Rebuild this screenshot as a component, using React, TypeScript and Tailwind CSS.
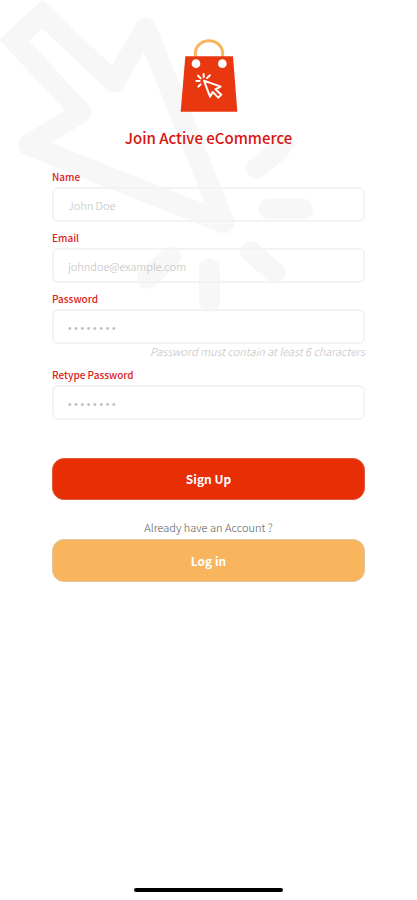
import type { InputHTMLAttributes } from "react";

function CursorBackdrop() {
  return (
    <svg
      aria-hidden="true"
      viewBox="0 0 960 960"
      className="pointer-events-none absolute left-0 top-0 size-80"
      fill="none"
      stroke="#f7f7f7"
      strokeWidth="63"
      strokeLinecap="round"
      strokeLinejoin="round"
    >
      <path d="M127 42 343 247 437 84 672 668 85 435 243 337 42 120Z" />
      <path d="M200 111 127 42 42 120 110 193" strokeLinejoin="miter" strokeLinecap="butt" />
      <path d="M770 505 838 449M807 627H908M752 755 825 818M628 807V905M512 772 442 835" />
      <path d="M800 480 872 418" strokeLinecap="butt" strokeWidth="50" />
    </svg>
  );
}

function BagLogo() {
  return (
    <svg aria-hidden="true" viewBox="0 0 180 225" className="h-[75px] w-[60px]" fill="none">
      <path d="M49 62V46a41 38 0 0 1 82 0V62" stroke="#f7b55c" strokeWidth="9" />
      <path d="M19 55H162L175 221H5Z" fill="#e9380f" />
      <circle cx="51" cy="77" r="13" fill="#fff" />
      <circle cx="130" cy="77" r="13" fill="#fff" />
      <g stroke="#fff" strokeWidth="6" strokeLinecap="round" strokeLinejoin="round">
        <path d="M75 128 125 146 109 154 127 170 118 179 101 162 93 176Z" />
        <path d="M74 118V108M84 120 93 112M65 121 57 113M62 129H52M65 139 58 146" />
      </g>
    </svg>
  );
}

type FieldProps = InputHTMLAttributes<HTMLInputElement> & {
  id: string;
  label: string;
  hint?: string;
};

function Field({ id, label, hint, ...props }: FieldProps) {
  return (
    <div className="flex flex-col">
      <label htmlFor={id} className="mb-[3px] text-[10px] font-medium leading-[15px] text-[#d9251c]">
        {label}
      </label>
      <input
        id={id}
        name={id}
        aria-describedby={hint ? `${id}-hint` : undefined}
        className="h-[35px] w-full rounded-md border-2 border-[#f3f3f3] bg-transparent px-3.5 text-[11px] font-light text-[#555] outline-none placeholder:text-[#bdbdbd] focus:border-[#f7b55c] [&[type=password]]:pt-1 [&[type=password]]:font-['Liberation_Sans',sans-serif] [&[type=password]]:text-[10px]"
        {...props}
      />
      {hint && (
        <p id={`${id}-hint`} className="text-right text-[11px] font-light italic leading-[15px] text-[#bdbdbd]">
          {hint}
        </p>
      )}
    </div>
  );
}

export default function App() {
  return (
    <main className="relative flex min-h-screen flex-col overflow-hidden bg-white font-['Noto_Sans_CJK_SC','Noto_Sans',sans-serif]">
      <CursorBackdrop />

      <div className="relative flex flex-col px-[52px] pt-[38px]">
        <header className="flex flex-col items-center">
          <BagLogo />
          <h1 className="mt-[13px] text-[15px] font-medium leading-6 text-[#d9150f]">
            Join Active eCommerce
          </h1>
        </header>

        <form className="mt-[19px] flex flex-col" onSubmit={(e) => e.preventDefault()}>
          <div className="flex flex-col gap-2">
            <Field id="name" label="Name" placeholder="John Doe" autoComplete="name" />
            <Field id="email" label="Email" type="email" placeholder="johndoe@example.com" autoComplete="email" />
            <Field
              id="password"
              label="Password"
              type="password"
              placeholder="• • • • • • • •"
              hint="Password must contain at least 6 characters"
              autoComplete="new-password"
            />
            <Field
              id="retype-password"
              label="Retype Password"
              type="password"
              placeholder="• • • • • • • •"
              autoComplete="new-password"
            />
          </div>

          <button
            type="submit"
            className="mt-[38px] h-[42px] rounded-xl border border-[#dd5a3c] bg-[#e82e04] text-[12px] font-bold text-white"
          >
            Sign Up
          </button>
          <p className="mt-[19px] text-center text-[11px] font-light leading-4 text-[#555]">Already have an Account ?</p>
          <button
            type="button"
            className="mt-1 h-[43px] rounded-xl border border-[#dfc5a0] bg-[#f8b55d] text-[12px] font-bold text-white"
          >
            Log in
          </button>
        </form>
      </div>

      <div className="relative mx-auto mb-2 mt-auto h-1 w-[149px] rounded-full bg-black" />
    </main>
  );
}
